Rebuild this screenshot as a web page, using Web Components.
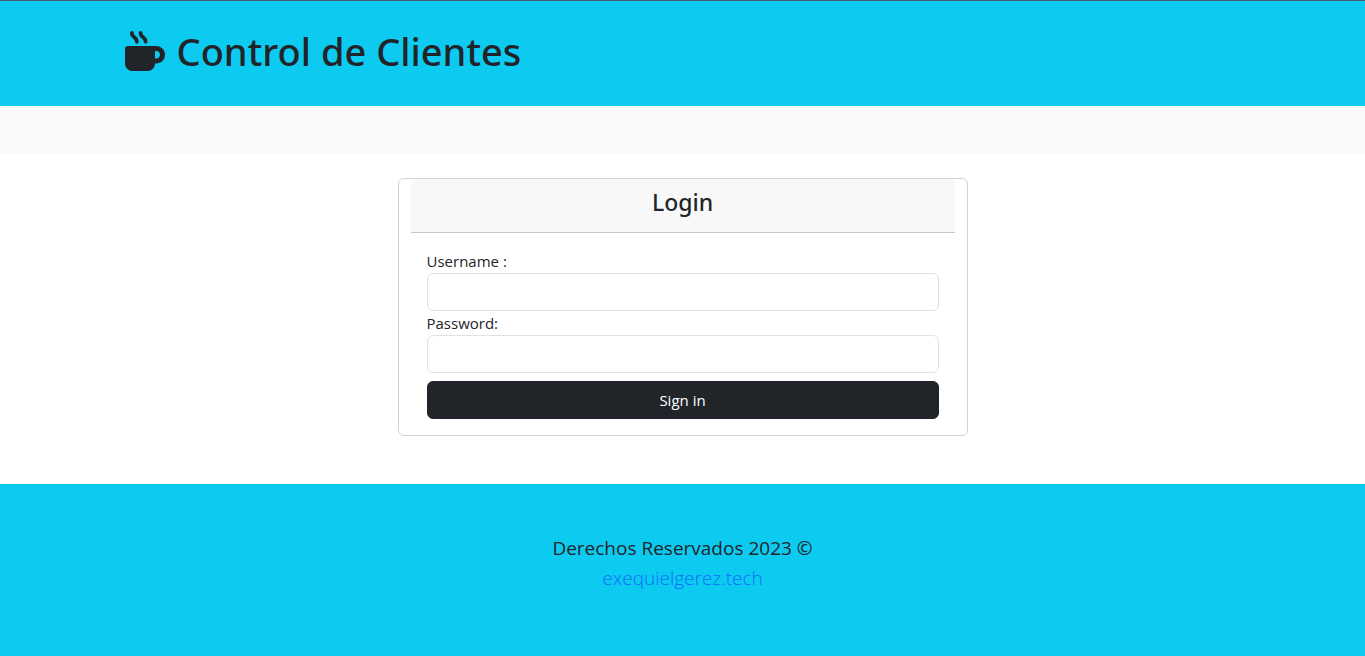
<!DOCTYPE html>
<html lang="es">
<head>
<meta charset="utf-8">
<meta name="viewport" content="width=device-width, initial-scale=1">
<title>Control de Clientes</title>
<style>
  body { margin: 0; background: #fff; color: #212529; font: 400 15px/24px "Open Sans", "Noto Sans", sans-serif; }
</style>
</head>
<body>
<clients-app></clients-app>
<script>
const define = (name, html, setup) => customElements.define(name, class extends HTMLElement {
  constructor() {
    super();
    this.attachShadow({ mode: "open" }).innerHTML = `<style>*{box-sizing:border-box}</style>${html}`;
    if (setup) setup(this, this.shadowRoot);
  }
});

define("mug-icon", `
  <style>:host{display:block;width:40px;height:40px} svg{display:block;width:100%;height:100%;fill:currentColor}</style>
  <svg viewBox="0 0 512 512" aria-hidden="true"><path d="M88 0C74.7 0 64 10.7 64 24c0 38.9 23.4 59.4 39.1 73.1l1.1 1C120.5 112.3 128 119.9 128 136c0 13.3 10.7 24 24 24s24-10.7 24-24c0-38.9-23.4-59.4-39.1-73.1l-1.1-1C119.5 47.7 112 40.1 112 24c0-13.3-10.7-24-24-24zM32 192c-17.7 0-32 14.3-32 32V416c0 53 43 96 96 96H288c53 0 96-43 96-96h16c61.9 0 112-50.1 112-112s-50.1-112-112-112H352 32zm352 64h16c26.5 0 48 21.5 48 48s-21.5 48-48 48H384V256zM224 24c0-13.3-10.7-24-24-24s-24 10.7-24 24c0 38.9 23.4 59.4 39.1 73.1l1.1 1C232.5 112.3 240 119.9 240 136c0 13.3 10.7 24 24 24s24-10.7 24-24c0-38.9-23.4-59.4-39.1-73.1l-1.1-1C231.5 47.7 224 40.1 224 24z"/></svg>`);

define("site-header", `
  <style>
    :host{display:block;background:#0dcaf0;border-top:1px solid #4b5a68;padding:25px 0 30px}
    .container{max-width:1140px;margin:0 auto;padding:0 12px}
    h1{display:flex;align-items:center;gap:12px;margin:0;font-family:"Noto Sans","Open Sans",sans-serif;font-size:38px;line-height:50px;font-weight:500}
  </style>
  <div class="container"><h1><mug-icon></mug-icon><span><slot></slot></span></h1></div>`);

define("action-bar", `<style>:host{display:block;background:#f8f9fa;padding:24px 0}</style><slot></slot>`);

define("form-field", `
  <style>
    :host{display:block}
    label{display:block}
    input{display:block;width:100%;height:38px;padding:6px 12px;border:1px solid #dee2e6;border-radius:6px;background:#fff;font:inherit;color:inherit}
  </style>
  <label for="field"></label><input id="field">`, (host, root) => {
    root.querySelector("label").textContent = host.getAttribute("label");
    const input = root.querySelector("input");
    input.type = host.getAttribute("type");
    input.name = host.getAttribute("name");
  });

define("login-card", `
  <style>
    :host{display:block;max-width:570px;margin:0 auto;border:1px solid #d0d1d2;border-radius:6px;padding:0 12px;background:#fff}
    header{padding:9px 16px 15px;background:#f8f8f8;border-bottom:1px solid #c8c8c8;border-radius:5px 5px 0 0;text-align:center}
    h2{margin:0;font-family:"Noto Sans","Open Sans",sans-serif;font-size:23px;line-height:29px;font-weight:500}
    form{padding:16px}
    button{display:block;width:100%;height:38px;margin-top:8px;padding:6px 12px;border:1px solid #212529;border-radius:6px;background:#212529;color:#fff;font:inherit}
  </style>
  <header><h2>Login</h2></header>
  <form>
    <form-field label="Username :" type="text" name="username"></form-field>
    <form-field label="Password:" type="password" name="password"></form-field>
    <button type="submit">Sign in</button>
  </form>`);

define("site-footer", `
  <style>
    :host{display:block;background:#0dcaf0;padding:49px 12px 63px;text-align:center;font-size:19px;line-height:30px}
    p{margin:0}
    a{color:#0d6efd;text-decoration:none;font-weight:300}
  </style>
  <p>Derechos Reservados 2023 ©</p><p><a href="#">exequielgerez.tech</a></p>`);

define("clients-app", `
  <style>:host{display:block} main{padding:24px 12px 48px}</style>
  <site-header>Control de Clientes</site-header>
  <action-bar></action-bar>
  <main><login-card></login-card></main>
  <site-footer></site-footer>`);
</script>
</body>
</html>
